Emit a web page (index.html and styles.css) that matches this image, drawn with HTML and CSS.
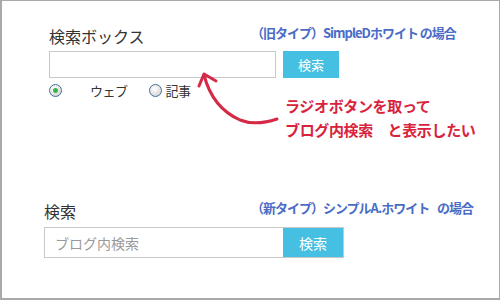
FILE: index.html
```html
<!DOCTYPE html>
<html lang="ja">
<head>
    <meta charset="UTF-8">
    <meta name="viewport" content="width=device-width, initial-scale=1.0">
    <title>検索ボックス</title>
    <link rel="stylesheet" href="styles.css">
</head>
<body>
    <div class="frame">
        <!-- old type: SimpleD white -->
        <section class="box box-old">
            <div class="box-head">
                <h2 class="box-title">検索ボックス</h2>
                <p class="note">（旧タイプ）SimpleDホワイト の場合</p>
            </div>
            <div class="form-old">
                <input type="text" class="field-old">
                <button class="btn btn-old">検索</button>
            </div>
            <div class="radios">
                <label class="opt"><input type="radio" name="where" class="radio" checked><span class="opt-web">ウェブ</span></label>
                <label class="opt"><input type="radio" name="where" class="radio"><span class="opt-post">記事</span></label>
            </div>
            <p class="wish">ラジオボタンを取って<br>ブログ内検索　と表示したい</p>
        </section>

        <!-- new type: Simple A white -->
        <section class="box box-new">
            <div class="box-head">
                <h2 class="box-title">検索</h2>
                <p class="note">（新タイプ）シンプルA.ホワイト&nbsp;&nbsp;&nbsp; の場合</p>
            </div>
            <div class="form-new">
                <input type="text" class="field-new" placeholder="ブログ内検索">
                <button class="btn btn-new">検索</button>
            </div>
        </section>

        <svg class="arrow" viewBox="0 0 500 300" width="500" height="300">
            <path d="M277 119 C262 124 250 124 240 120 C222 112 210 98 204 75" />
            <path d="M199 86 L204 74 L216 81" />
        </svg>
    </div>
</body>
</html>
```

FILE: styles.css
```css
body {
    margin: 0;
    padding: 0;
    background: #fff;
    font-family: "Noto Sans CJK JP", "Noto Sans", sans-serif;
    color: #333;
}
.frame {
    position: relative;
    width: 500px;
    height: 300px;
    box-sizing: border-box;
    border: 1px solid #a9a9a9;
    border-left-width: 2px;
    border-bottom-width: 2px;
    padding-top: 25px;
    overflow: hidden;
}
.box-head {
    display: flex;
    align-items: flex-start;
}
.box-title {
    margin: 0;
    font-size: 16px;
    line-height: 20px;
    font-weight: normal;
    color: #333;
}
.note {
    margin: 0;
    font-size: 13px;
    line-height: 14px;
    font-weight: bold;
    color: #4a6cc6;
    letter-spacing: -1px;
}
.btn {
    border: none;
    padding: 0;
    background: #45bfe2;
    color: #fff;
    font-family: inherit;
    cursor: pointer;
}

/* old type */
.box-old {
    padding-left: 47px;
}
.box-old .box-title {
    width: 202px;
}
.form-old {
    display: flex;
    gap: 7px;
    margin-top: 5px;
}
.field-old {
    width: 227px;
    height: 27px;
    box-sizing: border-box;
    border: 1px solid #c8c8c8;
    margin: 0;
    padding: 0 6px;
}
.btn-old {
    width: 56px;
    height: 27px;
    font-size: 13px;
}
.radios {
    display: flex;
    align-items: center;
    gap: 21px;
    margin-top: 6px;
    height: 13px;
    font-size: 13px;
    line-height: 13px;
    letter-spacing: -0.5px;
}
.opt {
    display: flex;
    align-items: center;
}
.radio {
    appearance: none;
    -webkit-appearance: none;
    width: 13px;
    height: 13px;
    margin: 0;
    border-radius: 50%;
    border: 1px solid #4a6f98;
    box-sizing: border-box;
    background: radial-gradient(circle at 40% 35%, #fff 0, #e6e6e6 50%, #c4c4c4 100%);
}
.radio:checked {
    background: radial-gradient(circle, #39b54a 0, #39b54a 2px, transparent 3px),
                radial-gradient(circle at 40% 35%, #fff 0, #e6e6e6 50%, #c4c4c4 100%);
}
.opt-web {
    margin-left: 28px;
}
.opt-post {
    margin-left: 4px;
}
.wish {
    margin: -3px 0 0 236px;
    font-size: 15px;
    line-height: 24px;
    font-weight: bold;
    color: #d9233d;
    letter-spacing: -0.35px;
}

/* new type */
.box-new {
    padding-left: 42px;
    margin-top: 59px;
}
.box-new .box-title {
    width: 207px;
}
.form-new {
    display: flex;
    width: 300px;
    height: 31px;
    box-sizing: border-box;
    border: 1px solid #c8c8c8;
    margin-top: 6px;
}
.field-new {
    flex: 1;
    border: none;
    margin: 0;
    padding: 0 10px;
    font-family: inherit;
    font-size: 14px;
    outline: none;
}
.field-new::placeholder {
    color: #9a9a9a;
}
.btn-new {
    width: 60px;
    height: 29px;
    font-size: 14px;
}

.arrow {
    position: absolute;
    left: -2px;
    top: -1px;
    pointer-events: none;
    fill: none;
    stroke: #d42a45;
    stroke-width: 3;
    stroke-linecap: round;
    stroke-linejoin: round;
}
```
